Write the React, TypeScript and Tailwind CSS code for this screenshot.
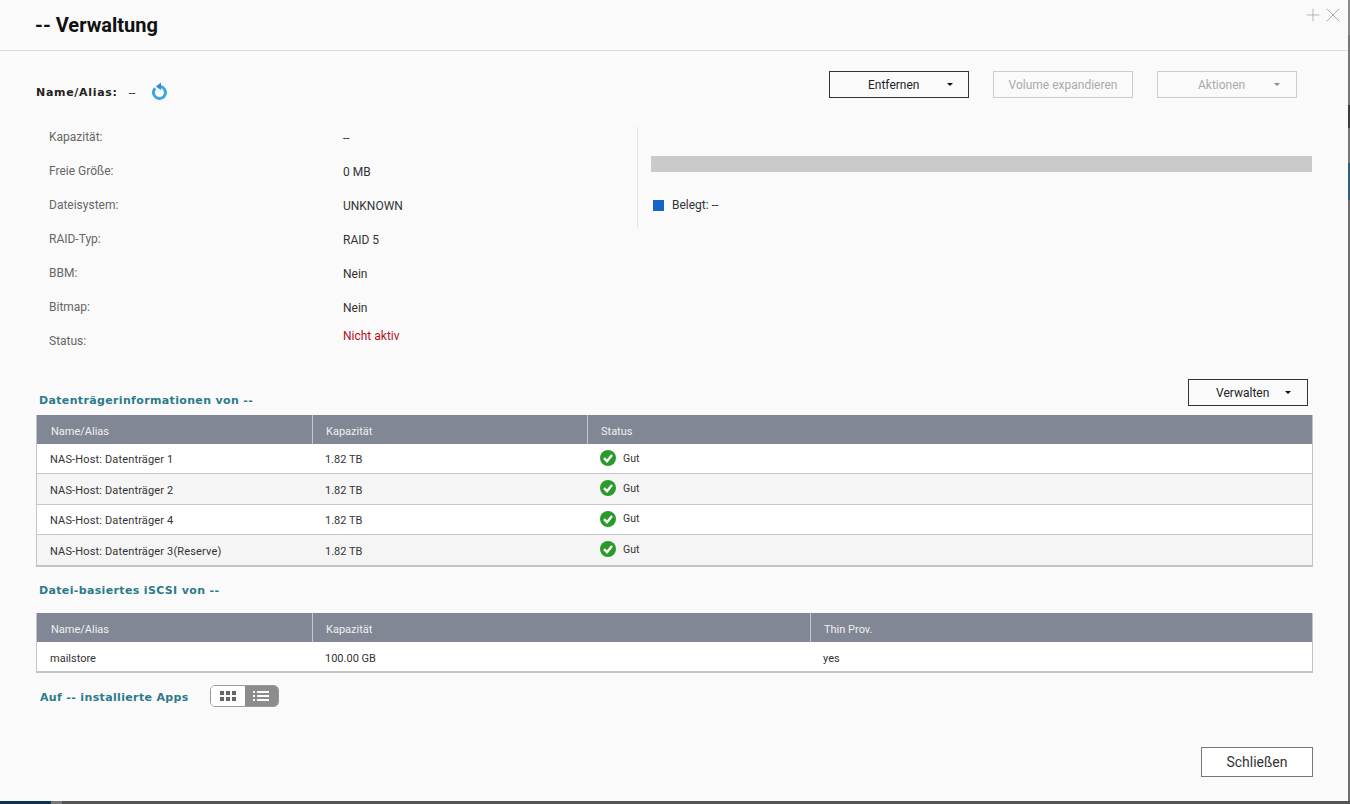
import { X, Plus } from 'lucide-react';

const infoRows = [
  { label: 'Kapazität:', value: '--' },
  { label: 'Freie Größe:', value: '0 MB' },
  { label: 'Dateisystem:', value: 'UNKNOWN' },
  { label: 'RAID-Typ:', value: 'RAID 5' },
  { label: 'BBM:', value: 'Nein' },
  { label: 'Bitmap:', value: 'Nein' },
];

const disks = [
  { name: 'NAS-Host: Datenträger 1', alt: false },
  { name: 'NAS-Host: Datenträger 2', alt: true },
  { name: 'NAS-Host: Datenträger 4', alt: false },
  { name: 'NAS-Host: Datenträger 3(Reserve)', alt: true },
];

function Caret({ muted }: { muted?: boolean }) {
  return (
    <span
      className={`h-0 w-0 border-x-[3.5px] border-t-[3px] border-x-transparent ${muted ? 'border-t-[#888888]' : 'border-t-[#111111]'}`}
    />
  );
}

function CheckIcon() {
  return (
    <svg width="16" height="16" viewBox="0 0 16 16" className="shrink-0">
      <circle cx="8" cy="8" r="8" fill="#2a9a2a" />
      <path d="M4 8.2 L7 11.2 L12 5" fill="none" stroke="#ffffff" strokeWidth="2.4" />
    </svg>
  );
}

function ReloadIcon() {
  return (
    <svg width="16" height="18" viewBox="0 0 16 18">
      <path d="M3.2 6.2 A6 6 0 1 0 8 4.5" fill="none" stroke="#3da5e0" strokeWidth="3" />
      <path d="M9 0.5 L9 8 L3.8 4.4 Z" fill="#2f8fd0" />
    </svg>
  );
}

function GridIcon() {
  return (
    <svg width="16" height="10" viewBox="0 0 16 10" fill="#666666">
      <rect x="0" y="0" width="4" height="4" />
      <rect x="6" y="0" width="4" height="4" />
      <rect x="12" y="0" width="4" height="4" />
      <rect x="0" y="6" width="4" height="4" />
      <rect x="6" y="6" width="4" height="4" />
      <rect x="12" y="6" width="4" height="4" />
    </svg>
  );
}

function ListIcon() {
  return (
    <svg width="16" height="10" viewBox="0 0 16 10" fill="#ffffff">
      <rect x="0" y="0" width="2" height="2" />
      <rect x="4" y="0" width="12" height="2" />
      <rect x="0" y="4" width="2" height="2" />
      <rect x="4" y="4" width="12" height="2" />
      <rect x="0" y="8" width="2" height="2" />
      <rect x="4" y="8" width="12" height="2" />
    </svg>
  );
}

function SectionTitle({ children }: { children: string }) {
  return (
    <span className="font-['DejaVu_Sans',sans-serif] text-[11px] leading-4 font-bold tracking-[0.35px] text-[#2b7a8c]">
      {children}
    </span>
  );
}

function HeaderCell({ children, divider }: { children: string; divider?: boolean }) {
  return (
    <div className={`flex items-center pt-[6px] ${divider ? 'border-l border-[#c4c8d0] pl-[13px]' : 'pl-[14px]'}`}>
      {children}
    </div>
  );
}

export default function App() {
  return (
    <div className="flex h-[804px] w-[1350px] flex-col overflow-hidden bg-[#666666] font-['Roboto',sans-serif] text-xs text-[#333333]">
      <div className="flex h-[801px]">
        <div className="relative flex w-[1348px] flex-col bg-[#fafafa]">
          {/* title bar */}
          <div className="flex h-[51px] shrink-0 items-center border-b border-[#dcdcdc] pl-[35px]">
            <h1 className="text-[20px] font-bold text-[#111111]">-- Verwaltung</h1>
          </div>
          <div className="absolute right-[3px] top-[3px] flex items-center text-[#aaaaaa]">
            <Plus size={20} strokeWidth={1} />
            <X size={24} strokeWidth={1} className="-ml-[2px]" />
          </div>

          {/* name and actions */}
          <div className="mt-[20px] flex h-[27px] shrink-0 pl-[36px] pr-[51px]">
            <div className="flex items-start pt-[14px]">
              <span className="font-['DejaVu_Sans',sans-serif] text-[11px] leading-4 font-bold tracking-[0.7px] text-[#222222]">
                Name/Alias:
              </span>
              <span className="ml-[11px] leading-4">--</span>
              <span className="ml-[17px] -mt-[3px]">
                <ReloadIcon />
              </span>
            </div>
            <div className="ml-auto flex gap-6">
              <button className="flex h-[27px] w-[140px] items-center border border-[#333333] bg-[#fafafa] pl-[38px] text-[#222222]">
                Entfernen
                <span className="ml-[28px] flex">
                  <Caret />
                </span>
              </button>
              <button className="h-[27px] w-[140px] border border-[#cccccc] text-[#aaaaaa]">Volume expandieren</button>
              <button className="flex h-[27px] w-[140px] items-center border border-[#cccccc] pl-[40px] text-[#aaaaaa]">
                Aktionen
                <span className="ml-[29px] flex">
                  <Caret muted />
                </span>
              </button>
            </div>
          </div>

          {/* summary */}
          <div className="mt-[23px] flex h-[238px] shrink-0">
            <div className="w-[637px] shrink-0 pl-[49px]">
              {infoRows.map((row) => (
                <div key={row.label} className="flex h-[34px] items-center">
                  <span className="w-[294px] -mt-[2px] text-[#666666]">{row.label}</span>
                  <span>{row.value}</span>
                </div>
              ))}
              <div className="flex h-[34px] items-center">
                <span className="w-[294px] -mt-[2px] text-[#666666]">Status:</span>
                <span className="-mt-[12px] text-[#b5121b]">Nicht aktiv</span>
              </div>
            </div>
            <div className="mt-[6px] h-[101px] grow border-l border-[#e2e2e2] pl-[13px] pr-[36px] pt-[29px]">
              <div className="h-4 bg-[#cacaca]" />
              <div className="ml-[2px] mt-[25px] flex items-center">
                <span className="h-[11px] w-[11px] bg-[#1565c8]" />
                <span className="ml-2">Belegt: --</span>
              </div>
            </div>
          </div>

          {/* disks */}
          <div className="mt-[20px] flex h-[27px] shrink-0 pl-[39px] pr-[40px]">
            <div className="pt-[13px]">
              <SectionTitle>Datenträgerinformationen von --</SectionTitle>
            </div>
            <button className="ml-auto flex h-[27px] w-[120px] items-center border border-[#333333] pl-[27px] text-[#222222]">
              Verwalten
              <span className="ml-[16px] flex">
                <Caret />
              </span>
            </button>
          </div>
          <div className="ml-[36px] mr-[35px] mt-[9px] shrink-0 border-x border-b-2 border-[#c4c4c4] text-[11px]">
            <div className="grid h-[29px] grid-cols-[275px_275px_1fr] bg-[#828795] text-[#f0f0f0]">
              <HeaderCell>Name/Alias</HeaderCell>
              <HeaderCell divider>Kapazität</HeaderCell>
              <HeaderCell divider>Status</HeaderCell>
            </div>
            {disks.map((disk, i) => (
              <div
                key={disk.name}
                className={`grid h-[30.25px] grid-cols-[275px_275px_1fr] items-center ${disk.alt ? 'bg-[#f5f5f5]' : 'bg-white'} ${i < disks.length - 1 ? 'border-b border-[#c8c8c8]' : ''}`}
              >
                <span className="pl-[13px] pt-[4px] tracking-[0.15px]">{disk.name}</span>
                <span className="pl-[13px] pt-[4px]">1.82 TB</span>
                <span className="-mt-[1px] flex items-center gap-[7px] pl-[13px] text-[10.5px]">
                  <CheckIcon />
                  <span className="pt-[1px]">Gut</span>
                </span>
              </div>
            ))}
          </div>

          {/* iscsi */}
          <div className="mt-[15px] h-4 shrink-0 pl-[39px]">
            <SectionTitle>Datei-basiertes iSCSI von --</SectionTitle>
          </div>
          <div className="ml-[36px] mr-[35px] mt-[15px] shrink-0 border-x border-b-2 border-[#c4c4c4] text-[11px]">
            <div className="grid h-[29px] grid-cols-[275px_498px_1fr] bg-[#828795] text-[#f0f0f0]">
              <HeaderCell>Name/Alias</HeaderCell>
              <HeaderCell divider>Kapazität</HeaderCell>
              <HeaderCell divider>Thin Prov.</HeaderCell>
            </div>
            <div className="grid h-[29px] grid-cols-[275px_498px_1fr] items-center bg-white">
              <span className="pl-[13px] pt-[5px]">mailstore</span>
              <span className="pl-[13px] pt-[5px]">100.00 GB</span>
              <span className="pl-[13px] pt-[5px]">yes</span>
            </div>
          </div>

          {/* apps */}
          <div className="mt-[12px] flex shrink-0 items-center pl-[40px]">
            <div className="pt-[3px]">
              <SectionTitle>Auf -- installierte Apps</SectionTitle>
            </div>
            <div className="ml-[21px] flex h-[22px] w-[69px] overflow-hidden rounded-[5px] border border-[#999999]">
              <div className="flex w-[34px] items-center justify-center bg-white">
                <GridIcon />
              </div>
              <div className="flex grow items-center justify-center bg-[#8c8c8c]">
                <ListIcon />
              </div>
            </div>
          </div>

          {/* footer */}
          <div className="mt-[40px] flex justify-end pr-[35px]">
            <button className="h-[30px] w-[112px] border border-[#777777] bg-white text-sm text-[#333333]">
              Schließen
            </button>
          </div>
        </div>

        {/* desktop peeking out on the right */}
        <div className="flex w-[2px] flex-col bg-[#6e6e6e]">
          <div className="h-[35px] bg-[#8a8a8a]" />
          <div className="h-[70px] bg-[#777777]" />
          <div className="h-[23px] bg-[#3a3a3a]" />
          <div className="h-[35px] bg-[#777777]" />
          <div className="h-[37px] bg-[#2e5f78]" />
        </div>
      </div>

      {/* desktop peeking out at the bottom */}
      <div className="flex h-[3px]">
        <div className="w-[51px] bg-[#10304f]" />
        <div className="w-[11px] bg-[#777777]" />
        <div className="grow bg-[#555555]" />
      </div>
    </div>
  );
}
